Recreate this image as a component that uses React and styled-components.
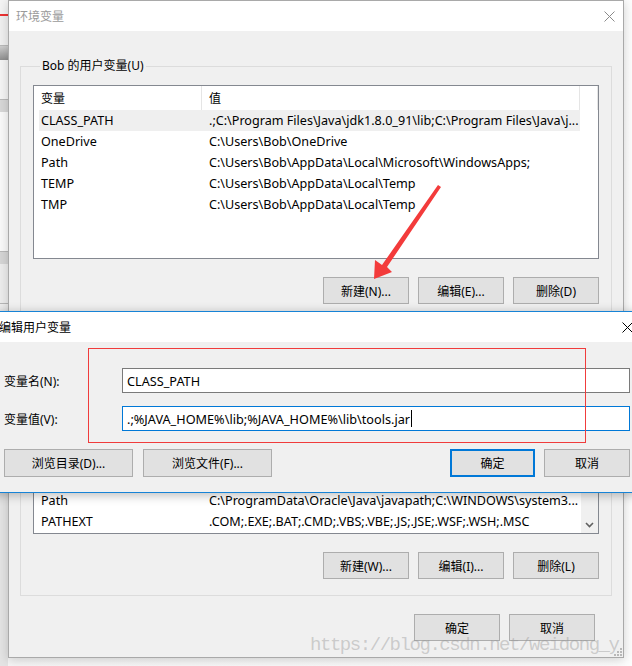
import styled, { createGlobalStyle } from "styled-components";

const UI_FONT = `"Noto Sans", "Noto Sans CJK SC", sans-serif`;

const GlobalStyle = createGlobalStyle`
  html, body {
    margin: 0;
    padding: 0;
  }
  body {
    width: 632px;
    height: 666px;
    overflow: hidden;
    background: #f4f4f4;
    font-family: ${UI_FONT};
    font-size: 12px;
    color: #000;
  }
  * {
    box-sizing: border-box;
  }
`;

const Desktop = styled.div`
  position: relative;
  width: 632px;
  height: 666px;
  overflow: hidden;
  background: linear-gradient(90deg, #e9e9e9 0px, #f6f6f6 8px, #fdfdfd 100%);
`;

const SideWindow = styled.div`
  position: absolute;
  left: -40px;
  top: 0;
  width: 48px;
  height: 666px;
  background: #f2f2f2;
  display: flex;
  flex-direction: column;
`;

const SideBand = styled.div`
  height: ${(p) => p.$h}px;
  background: ${(p) => p.$bg};
  border-bottom: ${(p) => (p.$line ? "1px solid #b9b9b9" : "none")};
`;

const Window = styled.section`
  position: absolute;
  left: ${(p) => p.$left}px;
  top: ${(p) => p.$top}px;
  width: ${(p) => p.$width}px;
  height: ${(p) => (p.$height ? `${p.$height}px` : "auto")};
  display: flex;
  flex-direction: column;
  background: #f0f0f0;
  border: 1px solid ${(p) => (p.$active ? "#1783d6" : "#a9a9a9")};
  box-shadow: 0 2px 10px rgba(0, 0, 0, ${(p) => (p.$active ? 0.28 : 0.18)});
`;

const TitleBar = styled.header`
  height: 30px;
  flex-shrink: 0;
  display: flex;
  align-items: center;
  justify-content: space-between;
  padding-left: 7px;
  background: #fff;
  color: ${(p) => (p.$active ? "#000" : "#9a9a9a")};
  font-size: 12px;
`;

const CloseButton = styled.div`
  width: 28px;
  height: 30px;
  display: flex;
  align-items: center;
  justify-content: center;
`;

const Body = styled.div`
  flex: 1;
  display: flex;
  flex-direction: column;
  padding: ${(p) => p.$pad};
`;

const Group = styled.fieldset`
  margin: ${(p) => p.$mt}px 0 0 0;
  padding: ${(p) => p.$pt ?? 11}px 12px 16px 12px;
  border: 1px solid #dcdcdc;
  min-width: 0;
`;

const Legend = styled.legend`
  margin-left: 7px;
  padding: 0 2px;
  line-height: 16px;
  font-size: 12px;
`;

const ListView = styled.div`
  height: 174px;
  border: 1px solid #848890;
  background: #fff;
  display: flex;
  overflow: hidden;
`;

const ListMain = styled.div`
  flex: 1;
  min-width: 0;
  display: flex;
  flex-direction: column;
  justify-content: ${(p) => (p.$bottom ? "flex-end" : "flex-start")};
  padding-bottom: ${(p) => (p.$bottom ? 1 : 0)}px;
`;

const HeaderRow = styled.div`
  height: 24px;
  flex-shrink: 0;
  display: flex;
`;

const HeaderCell = styled.div`
  width: ${(p) => (p.$w ? `${p.$w}px` : "auto")};
  flex: ${(p) => (p.$w ? "none" : 1)};
  display: flex;
  align-items: center;
  padding-left: 7px;
  border-right: 1px solid #e5e5e5;
`;

const Row = styled.div`
  height: 21px;
  flex-shrink: 0;
  width: 541px;
  margin-left: 5px;
  display: flex;
  align-items: center;
  font-size: 12.6px;
  background: ${(p) => (p.$selected ? "#efefef" : "transparent")};
`;

const NameCell = styled.div`
  width: 163px;
  padding-left: 2px;
  flex-shrink: 0;
  white-space: nowrap;
`;

const ValueCell = styled.div`
  flex: 1;
  min-width: 0;
  padding-left: 7px;
  white-space: nowrap;
  overflow: hidden;
  text-overflow: ellipsis;
`;

const ScrollTrack = styled.div`
  width: 17px;
  flex-shrink: 0;
  background: #f0f0f0;
  display: flex;
  flex-direction: column;
  justify-content: flex-end;
  align-items: center;
`;

const ScrollArrow = styled.div`
  height: 17px;
  display: flex;
  align-items: center;
`;

const ButtonRow = styled.div`
  display: flex;
  justify-content: ${(p) => p.$justify || "flex-end"};
  gap: ${(p) => p.$gap ?? 9}px;
  margin-top: ${(p) => p.$mt ?? 18}px;
  padding-right: ${(p) => p.$pr ?? 0}px;
`;

const ButtonGroup = styled.div`
  display: flex;
  gap: ${(p) => p.$gap}px;
`;

const Button = styled.button`
  width: ${(p) => p.$w || 86}px;
  height: ${(p) => p.$h || 27}px;
  padding: 0;
  font-family: ${UI_FONT};
  font-size: 12px;
  color: #000;
  background: #e1e1e1;
  border: ${(p) => (p.$primary ? "2px solid #0078d7" : "1px solid #adadad")};
`;

const FieldGrid = styled.div`
  display: grid;
  grid-template-columns: 118px 1fr;
  row-gap: 13px;
  align-items: center;
`;

const FieldLabel = styled.label`
  font-size: 12px;
`;

const TextBox = styled.div`
  height: 25px;
  display: flex;
  align-items: center;
  padding-left: 4px;
  font-size: 12.7px;
  background: #fff;
  border: 1px solid ${(p) => (p.$focused ? "#0078d7" : "#7a7a7a")};
  white-space: nowrap;
`;

const Caret = styled.span`
  display: inline-block;
  width: 1px;
  height: 17px;
  margin-left: 1px;
  background: #000;
`;

const Overlay = styled.svg`
  position: absolute;
  left: 0;
  top: 0;
  pointer-events: none;
`;

const Watermark = styled.div`
  position: absolute;
  left: 310px;
  top: 634px;
  font-family: "Liberation Mono", "DejaVu Sans Mono", monospace;
  font-size: 19px;
  letter-spacing: -1.45px;
  color: rgba(150, 150, 150, 0.42);
  pointer-events: none;
  white-space: nowrap;
`;

const Grip = styled.svg`
  position: absolute;
  right: 1px;
  bottom: 1px;
`;

const userVars = [
  ["CLASS_PATH", ".;C:\\Program Files\\Java\\jdk1.8.0_91\\lib;C:\\Program Files\\Java\\j..."],
  ["OneDrive", "C:\\Users\\Bob\\OneDrive"],
  ["Path", "C:\\Users\\Bob\\AppData\\Local\\Microsoft\\WindowsApps;"],
  ["TEMP", "C:\\Users\\Bob\\AppData\\Local\\Temp"],
  ["TMP", "C:\\Users\\Bob\\AppData\\Local\\Temp"],
];

const systemVars = [
  ["Path", "C:\\ProgramData\\Oracle\\Java\\javapath;C:\\WINDOWS\\system3..."],
  ["PATHEXT", ".COM;.EXE;.BAT;.CMD;.VBS;.VBE;.JS;.JSE;.WSF;.WSH;.MSC"],
];

const CloseIcon = ({ color }) => (
  <svg width="11" height="11" viewBox="0 0 11 11">
    <path d="M0.5 0.5 L10.5 10.5 M10.5 0.5 L0.5 10.5" stroke={color} strokeWidth="1" fill="none" />
  </svg>
);

const VarList = ({ rows, system }) => (
  <ListView>
    <ListMain $bottom={system}>
      {!system && (
        <HeaderRow>
          <HeaderCell $w={168}>变量</HeaderCell>
          <HeaderCell $w={378}>值</HeaderCell>
          <HeaderCell />
        </HeaderRow>
      )}
      {rows.map(([name, value], i) => (
        <Row key={name} $selected={!system && i === 0}>
          <NameCell>{name}</NameCell>
          <ValueCell>{value}</ValueCell>
        </Row>
      ))}
    </ListMain>
    {system && (
      <ScrollTrack>
        <ScrollArrow>
          <svg width="9" height="6" viewBox="0 0 9 6">
            <path d="M1 1 L4.5 4.5 L8 1" stroke="#606060" strokeWidth="1.6" fill="none" />
          </svg>
        </ScrollArrow>
      </ScrollTrack>
    )}
  </ListView>
);

const App = () => {
  return (
    <Desktop>
      <GlobalStyle />
      <SideWindow>
        <SideBand $h={14} $bg="#f4f4f4" />
        <SideBand $h={2} $bg="#e33" />
        <SideBand $h={30} $bg="#f0f0f0" $line />
        <SideBand $h={14} $bg="linear-gradient(#cfcfcf, #8e8e8e)" />
        <SideBand $h={40} $bg="#f5f5f5" $line />
        <SideBand $h={12} $bg="#d8d8d8" />
        <SideBand $h={140} $bg="#fafafa" $line />
        <SideBand $h={12} $bg="#d6d6d6" />
        <SideBand $h={40} $bg="#ededed" $line />
        <SideBand $h={180} $bg="#f0f0f0" />
        <SideBand $h={182} $bg="#e4e4e4" />
      </SideWindow>

      <Window $left={8} $top={0} $width={616} $height={658}>
        <TitleBar>
          <span>环境变量</span>
          <CloseButton>
            <CloseIcon color="#8a8a8a" />
          </CloseButton>
        </TitleBar>
        <Body $pad="0 11px 16px 11px">
          <Group $mt={27}>
            <Legend>Bob 的用户变量(U)</Legend>
            <VarList rows={userVars} />
            <ButtonRow>
              <Button>新建(N)...</Button>
              <Button>编辑(E)...</Button>
              <Button>删除(D)</Button>
            </ButtonRow>
          </Group>
          {/* system group: its caption and upper rows sit under the edit dialog */}
          <Group $mt={19} $pt={19}>
            <VarList rows={systemVars} system />
            <ButtonRow>
              <Button>新建(W)...</Button>
              <Button>编辑(I)...</Button>
              <Button>删除(L)</Button>
            </ButtonRow>
          </Group>
          <ButtonRow $pr={17}>
            <Button>确定</Button>
            <Button>取消</Button>
          </ButtonRow>
        </Body>
        <Grip width="8" height="8" viewBox="0 0 8 8">
          {[
            [6, 0], [6, 3], [3, 3], [6, 6], [3, 6], [0, 6],
          ].map(([x, y]) => (
            <rect key={`${x}-${y}`} x={x} y={y} width="2" height="2" fill="#b8b8b8" />
          ))}
        </Grip>
      </Window>

      <Window $left={-9} $top={311} $width={651} $active>
        <TitleBar $active>
          <span>编辑用户变量</span>
          <CloseButton>
            <CloseIcon color="#000" />
          </CloseButton>
        </TitleBar>
        <Body $pad="26px 11px 15px 12px">
          <FieldGrid>
            <FieldLabel>变量名(N):</FieldLabel>
            <TextBox>CLASS_PATH</TextBox>
            <FieldLabel>变量值(V):</FieldLabel>
            <TextBox $focused>
              .;%JAVA_HOME%\lib;%JAVA_HOME%\lib\tools.jar
              <Caret />
            </TextBox>
          </FieldGrid>
          <ButtonRow $justify="space-between" $gap={0}>
            <ButtonGroup $gap={10}>
              <Button $w={129} $h={28}>浏览目录(D)...</Button>
              <Button $w={129} $h={28}>浏览文件(F)...</Button>
            </ButtonGroup>
            <ButtonGroup $gap={9}>
              <Button $w={85} $h={28} $primary>确定</Button>
              <Button $w={86} $h={28}>取消</Button>
            </ButtonGroup>
          </ButtonRow>
        </Body>
      </Window>

      <Overlay width="632" height="666" viewBox="0 0 632 666">
        <rect x="88.5" y="348.5" width="497" height="94" fill="none" stroke="#f03c3c" strokeWidth="1" />
        <polygon
          points="438,185 441,187 387,267 392,272 374,279 375,260 382,265"
          fill="#f33b3b"
        />
      </Overlay>

      <Watermark>https://blog.csdn.net/weidong_y</Watermark>
    </Desktop>
  );
};

export default App;
